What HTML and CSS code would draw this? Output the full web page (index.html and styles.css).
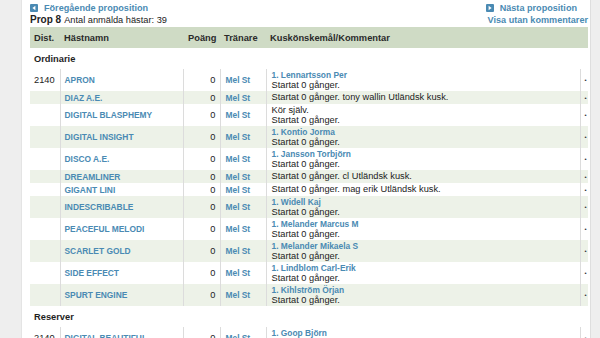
FILE: index.html
```html
<!DOCTYPE html>
<html lang="sv">
<head>
<meta charset="utf-8">
<title>Prop 8</title>
<link rel="stylesheet" href="styles.css">
</head>
<body>
<div class="page">
  <div class="nav">
    <div class="nav-left">
      <div class="line"><svg class="icon" width="8" height="8" viewBox="0 0 8 8"><rect width="8" height="8" rx="1" fill="#4a8ab3"/><path d="M5.4 1.8 L2.4 4 L5.4 6.2 Z" fill="#fff"/></svg><a class="toplink" href="#">Föregående proposition</a></div>
      <div class="line"><b>Prop 8</b> Antal anmälda hästar: 39</div>
    </div>
    <div class="nav-right">
      <div class="line first"><svg class="icon" width="8" height="8" viewBox="0 0 8 8"><rect width="8" height="8" rx="1" fill="#4a8ab3"/><path d="M2.6 1.8 L5.6 4 L2.6 6.2 Z" fill="#fff"/></svg><a class="toplink" href="#">Nästa proposition</a></div>
      <div class="line"><a class="toplink" href="#">Visa utan kommentarer</a></div>
    </div>
  </div>

  <table class="props">
    <colgroup>
      <col class="c-dist"><col class="c-name"><col class="c-pts"><col class="c-tr"><col class="c-kusk"><col class="c-dot">
    </colgroup>
    <thead>
      <tr><th>Dist.</th><th>Hästnamn</th><th class="num">Poäng</th><th>Tränare</th><th>Kuskönskemål/Kommentar</th><th></th></tr>
    </thead>
    <tbody>
      <tr class="section"><td colspan="6">Ordinarie</td></tr>
      <tr><td>2140</td><td><a class="nm" href="#">APRON</a></td><td class="num">0</td><td><a class="nm" href="#">Mel St</a></td><td class="kusk"><a class="nm" href="#">1. Lennartsson Per</a><br>Startat 0 gånger.</td><td class="dot">•</td></tr>
      <tr class="alt"><td></td><td><a class="nm" href="#">DIAZ A.E.</a></td><td class="num">0</td><td><a class="nm" href="#">Mel St</a></td><td class="kusk">Startat 0 gånger. tony wallin Utländsk kusk.</td><td class="dot">•</td></tr>
      <tr><td></td><td><a class="nm" href="#">DIGITAL BLASPHEMY</a></td><td class="num">0</td><td><a class="nm" href="#">Mel St</a></td><td class="kusk">Kör själv.<br>Startat 0 gånger.</td><td class="dot">•</td></tr>
      <tr class="alt"><td></td><td><a class="nm" href="#">DIGITAL INSIGHT</a></td><td class="num">0</td><td><a class="nm" href="#">Mel St</a></td><td class="kusk"><a class="nm" href="#">1. Kontio Jorma</a><br>Startat 0 gånger.</td><td class="dot">•</td></tr>
      <tr><td></td><td><a class="nm" href="#">DISCO A.E.</a></td><td class="num">0</td><td><a class="nm" href="#">Mel St</a></td><td class="kusk"><a class="nm" href="#">1. Jansson Torbjörn</a><br>Startat 0 gånger.</td><td class="dot">•</td></tr>
      <tr class="alt"><td></td><td><a class="nm" href="#">DREAMLINER</a></td><td class="num">0</td><td><a class="nm" href="#">Mel St</a></td><td class="kusk">Startat 0 gånger. cl Utländsk kusk.</td><td class="dot">•</td></tr>
      <tr><td></td><td><a class="nm" href="#">GIGANT LINI</a></td><td class="num">0</td><td><a class="nm" href="#">Mel St</a></td><td class="kusk">Startat 0 gånger. mag erik Utländsk kusk.</td><td class="dot">•</td></tr>
      <tr class="alt"><td></td><td><a class="nm" href="#">INDESCRIBABLE</a></td><td class="num">0</td><td><a class="nm" href="#">Mel St</a></td><td class="kusk"><a class="nm" href="#">1. Widell Kaj</a><br>Startat 0 gånger.</td><td class="dot">•</td></tr>
      <tr><td></td><td><a class="nm" href="#">PEACEFUL MELODI</a></td><td class="num">0</td><td><a class="nm" href="#">Mel St</a></td><td class="kusk"><a class="nm" href="#">1. Melander Marcus M</a><br>Startat 0 gånger.</td><td class="dot">•</td></tr>
      <tr class="alt"><td></td><td><a class="nm" href="#">SCARLET GOLD</a></td><td class="num">0</td><td><a class="nm" href="#">Mel St</a></td><td class="kusk"><a class="nm" href="#">1. Melander Mikaela S</a><br>Startat 0 gånger.</td><td class="dot">•</td></tr>
      <tr><td></td><td><a class="nm" href="#">SIDE EFFECT</a></td><td class="num">0</td><td><a class="nm" href="#">Mel St</a></td><td class="kusk"><a class="nm" href="#">1. Lindblom Carl-Erik</a><br>Startat 0 gånger.</td><td class="dot">•</td></tr>
      <tr class="alt"><td></td><td><a class="nm" href="#">SPURT ENGINE</a></td><td class="num">0</td><td><a class="nm" href="#">Mel St</a></td><td class="kusk"><a class="nm" href="#">1. Kihlström Örjan</a><br>Startat 0 gånger.</td><td class="dot">•</td></tr>
      <tr class="section"><td colspan="6">Reserver</td></tr>
      <tr><td>2140</td><td><a class="nm" href="#">DIGITAL BEAUTIFUL</a></td><td class="num">0</td><td><a class="nm" href="#">Mel St</a></td><td class="kusk"><a class="nm" href="#">1. Goop Björn</a><br>Startat 0 gånger.</td><td class="dot">•</td></tr>
    </tbody>
  </table>
</div>
</body>
</html>
```
FILE: styles.css
```css
html, body {
  margin: 0;
  padding: 0;
}
body {
  background: #eeeeee;
  font-family: "Liberation Sans", Arial, sans-serif;
  font-size: 9.25px;
  color: #222;
  height: 338px;
  overflow: hidden;
}
.page {
  margin-left: 21px;
  width: 558px;
  height: 336px;
  background: #fff;
  border-left: 1px solid #e4e4e4;
  border-right: 1px solid #dedede;
  padding: 2px 2px 0 8px;
  overflow: hidden;
}
a {
  text-decoration: none;
  color: #4a8ab3;
}
.nav {
  display: flex;
  justify-content: space-between;
  align-items: flex-start;
}
.nav-left, .nav-right {
  display: flex;
  flex-direction: column;
}
.nav-right {
  align-items: flex-end;
}
.line {
  height: 12px;
  line-height: 12px;
  display: flex;
  align-items: center;
  white-space: nowrap;
}
.nav-right .first {
  margin-right: 11px;
}
.line b {
  font-size: 10px;
  margin-right: 3px;
}
.icon {
  margin-right: 6px;
  flex: none;
}
.toplink {
  font-weight: bold;
  font-size: 9.1px;
}
.props {
  margin-top: 1px;
  width: 558px;
  table-layout: fixed;
  border-collapse: collapse;
}
.c-dist { width: 30px; }
.c-name { width: 123px; }
.c-pts { width: 37px; }
.c-tr { width: 46px; }
.c-kusk { width: 314px; }
.c-dot { width: 8px; }
th {
  background: #cfdbc5;
  height: 21px;
  padding: 0 4px;
  text-align: left;
  font-size: 9.3px;
  font-weight: bold;
  color: #2a2a2a;
  white-space: nowrap;
  overflow: hidden;
}
th.num {
  padding: 0 2px 0 5px;
}
td {
  padding: 1.5px 4px;
  line-height: 10px;
  vertical-align: middle;
  white-space: nowrap;
  overflow: hidden;
}
td.kusk {
  padding: 0.5px 4px 0.5px 5px;
  line-height: 10.5px;
}
tbody tr td + td {
  border-left: 1px solid #dcdcdc;
}
tr.section td {
  height: 21px;
  padding: 0 4px;
  font-weight: bold;
  font-size: 9.3px;
  line-height: 12px;
  color: #1e1e1e;
  border: none;
}
tr.alt td {
  background: #edf2e8;
}
td.num {
  text-align: right;
  padding-right: 4px;
}
td:nth-child(4) {
  padding-left: 5px;
}
.nm {
  font-weight: bold;
  font-size: 8.4px;
}
td.dot {
  padding: 0 0 0 4px;
  font-size: 6px;
  color: #333;
  overflow: visible;
}
```
